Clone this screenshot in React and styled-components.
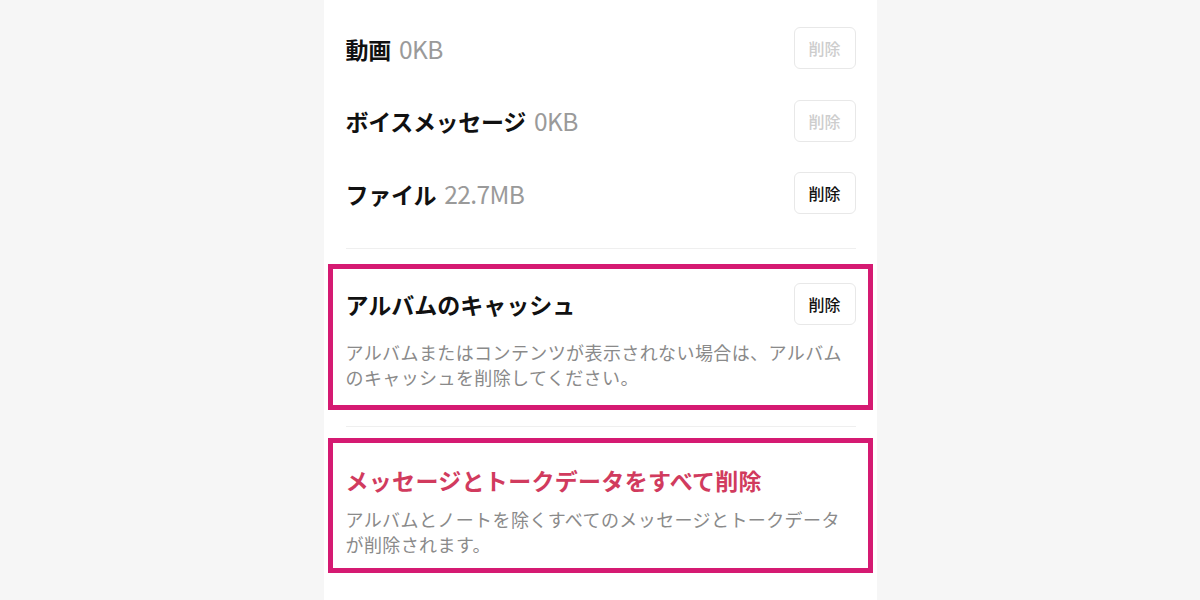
import React from "react";
import styled, { createGlobalStyle } from "styled-components";

const GlobalStyle = createGlobalStyle`
  body {
    margin: 0;
    background: #f6f6f6;
    font-family: "Noto Sans CJK JP", "Noto Sans", sans-serif;
    color: #111;
  }
`;

const Panel = styled.div`
  width: 553px;
  min-height: 100vh;
  margin: 0 auto;
  background: #fff;
  padding: 12px 21px 0 22px;
  box-sizing: border-box;
`;

const Row = styled.div`
  display: flex;
  align-items: center;
  justify-content: space-between;
  height: ${(p) => p.h || 72}px;
`;

const Label = styled.div`
  display: flex;
  align-items: baseline;
  font-size: 23px;
  font-weight: 700;
  letter-spacing: -0.3px;
`;

const Size = styled.span`
  font-size: 24.5px;
  font-weight: 400;
  color: #9a9a9a;
  margin-left: 8px;
  letter-spacing: -0.6px;
`;

const Button = styled.button`
  width: 62px;
  height: 42px;
  border: 1px solid #e8e8e8;
  border-radius: 6px;
  background: #fff;
  font-family: inherit;
  font-size: 16px;
  font-weight: 500;
  color: ${(p) => (p.disabled ? "#cdcdcd" : "#111")};
  padding: 0;
`;

const Divider = styled.hr`
  border: none;
  height: 1px;
  background: #efefef;
  margin: ${(p) => p.m};
`;

const Highlight = styled.div`
  border: 5px solid #d51a72;
  margin: 0 -17px 0 -18px;
  padding: ${(p) => p.pad};
`;

const Title = styled.div`
  font-size: 23px;
  font-weight: 700;
  line-height: 32px;
  letter-spacing: ${(p) => p.ls || 0}px;
  color: ${(p) => p.color || "#111"};
`;

const Desc = styled.p`
  margin: ${(p) => p.m};
  font-size: 18px;
  line-height: 25px;
  letter-spacing: 0.4px;
  color: #8a8a8a;
`;

const items = [
  { name: "動画", size: "0KB", disabled: true },
  { name: "ボイスメッセージ", size: "0KB", disabled: true },
  { name: "ファイル", size: "22.7MB", disabled: false },
];

export default function App() {
  return (
    <>
      <GlobalStyle />
      <Panel>
        {items.map((it) => (
          <Row key={it.name} h={72.5}>
            <Label>
              {it.name}
              <Size>{it.size}</Size>
            </Label>
            <Button disabled={it.disabled}>削除</Button>
          </Row>
        ))}
        <Divider m="18px 0 15px" />
        <Highlight pad="14px 12px 15px 13px">
          <Row h={42}>
            <Title>アルバムのキャッシュ</Title>
            <Button>削除</Button>
          </Row>
          <Desc m="15px 0 0">
            アルバムまたはコンテンツが表示されない場合は、アルバムのキャッシュを削除してください。
          </Desc>
        </Highlight>
        <Divider m="16px 0 11px" />
        <Highlight pad="21px 12px 11px 13px">
          <Title color="#d13b5e" ls={0.3}>
            メッセージとトークデータをすべて削除
          </Title>
          <Desc m="11px 0 0">
            アルバムとノートを除くすべてのメッセージとトークデータが削除されます。
          </Desc>
        </Highlight>
      </Panel>
    </>
  );
}
